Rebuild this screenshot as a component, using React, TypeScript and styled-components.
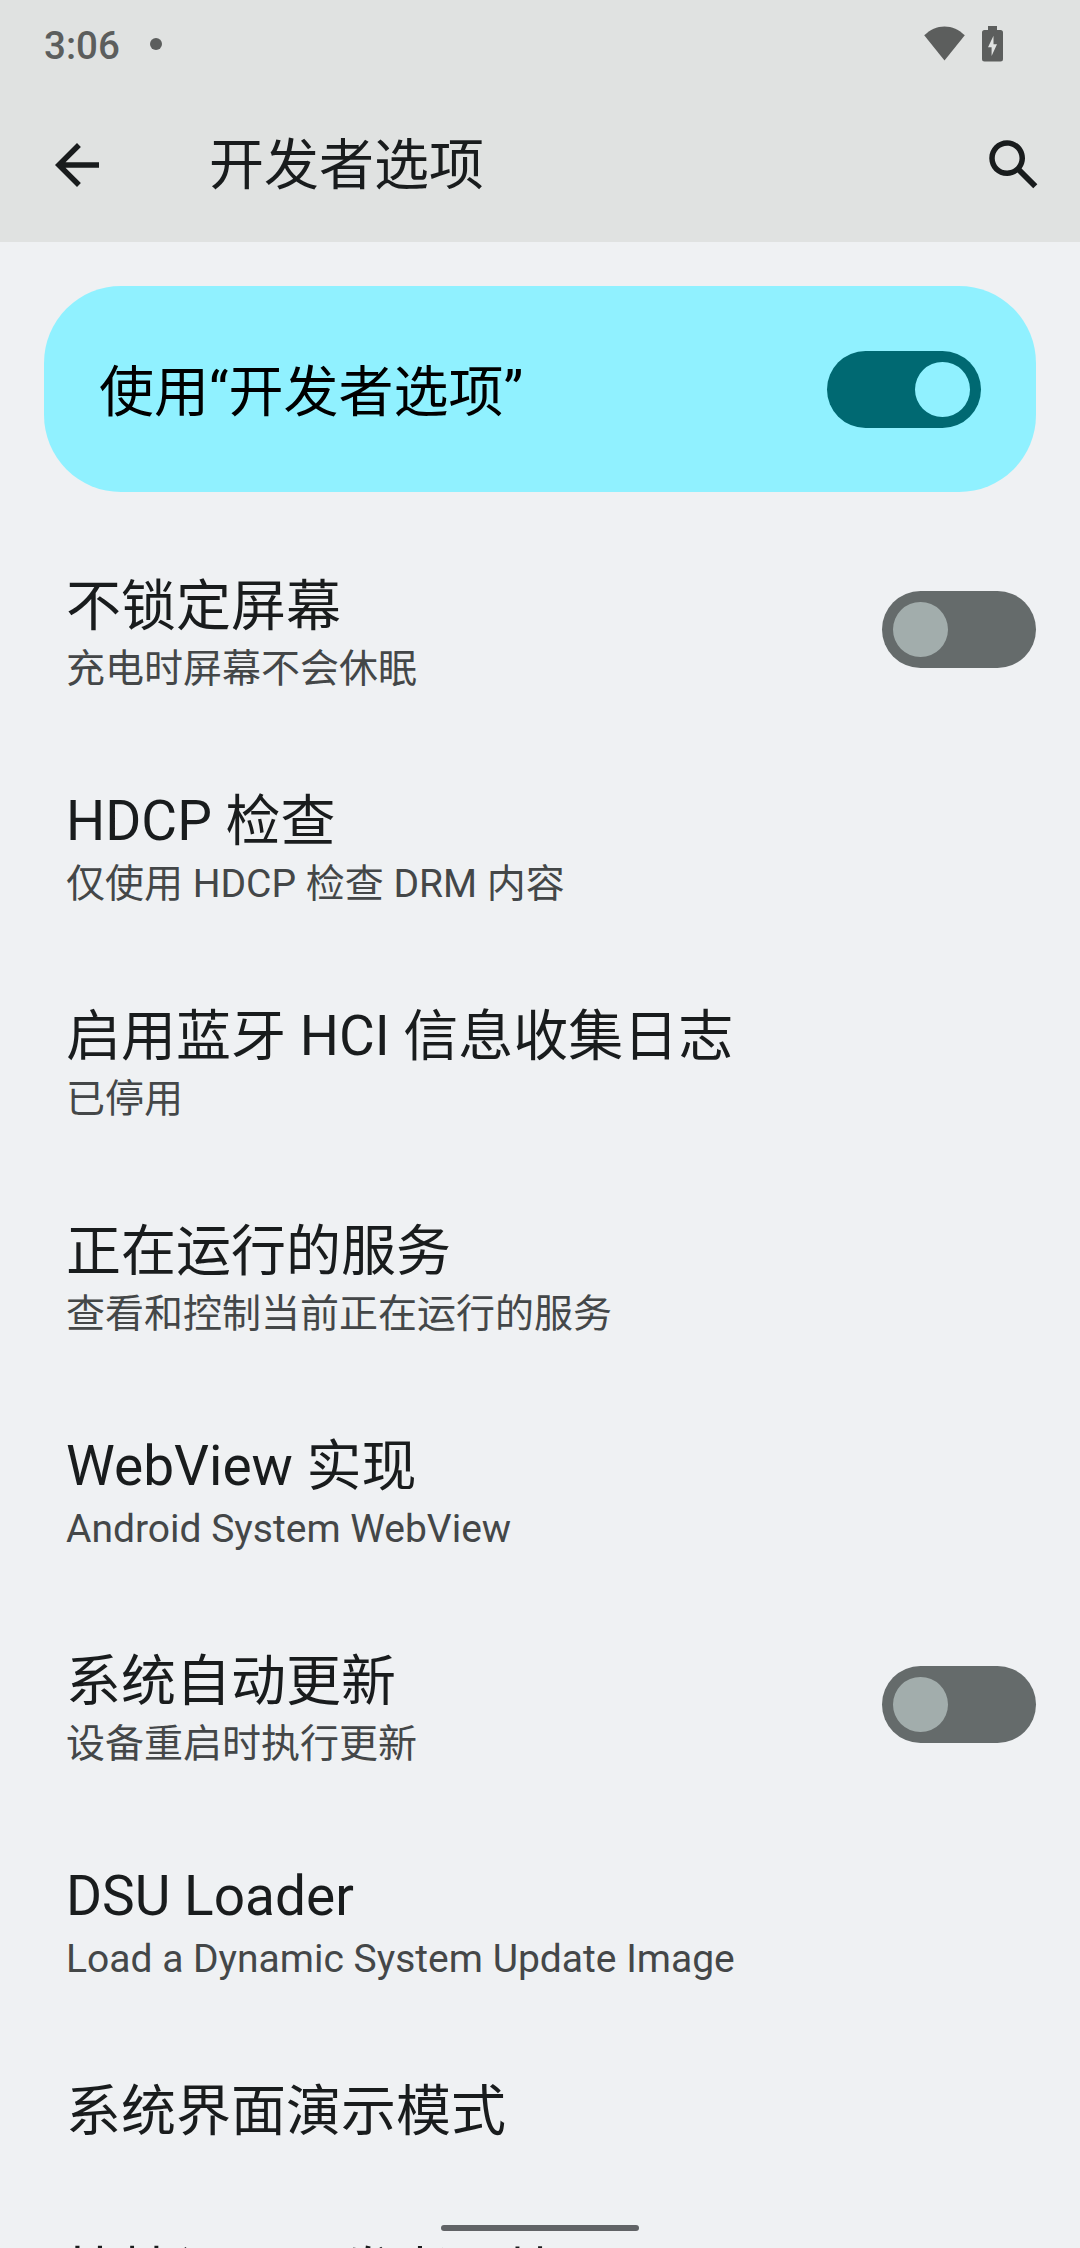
import React from 'react';
import styled, { createGlobalStyle } from 'styled-components';

const GlobalStyle = createGlobalStyle`
  * { box-sizing: border-box; }
  html, body { margin: 0; padding: 0; }
  body {
    background: #eff1f3;
    overflow: hidden;
    font-family: Roboto, 'Noto Sans CJK SC', sans-serif;
  }
`;

const Screen = styled.div`
  position: relative;
  display: flex;
  flex-direction: column;
  width: 1080px;
  height: 2248px;
  overflow: hidden;
  background: #eff1f3;
  color: #191c1d;
`;

const Header = styled.header`
  flex: none;
  height: 242px;
  background: #e0e2e1;
`;

const StatusBar = styled.div`
  display: flex;
  align-items: center;
  height: 88px;
  padding: 0 77px 0 44px;
  color: #5c5e5d;
`;

const Clock = styled.span`
  font-size: 38.5px;
  font-weight: 500;
  line-height: 46px;
  padding-top: 4px;
`;

const NotificationDot = styled.span`
  width: 12px;
  height: 12px;
  margin-left: 30px;
  border-radius: 50%;
  background: currentColor;
`;

const StatusIcons = styled.div`
  display: flex;
  align-items: flex-start;
  gap: 17px;
  height: 36px;
  margin-left: auto;
`;

const Toolbar = styled.div`
  display: flex;
  align-items: center;
  height: 154px;
  padding: 0 33px 0 44px;
`;

const IconButton = styled.button`
  display: flex;
  width: 66px;
  height: 66px;
  padding: 0;
  border: 0;
  background: none;
  color: #191c1d;
`;

const ToolbarTitle = styled.h1`
  flex: 1;
  margin: 0 0 0 99px;
  font-size: 55px;
  font-weight: 400;
  line-height: 65px;
`;

const MainSwitchCard = styled.section`
  flex: none;
  display: flex;
  align-items: center;
  justify-content: space-between;
  height: 206px;
  margin: 44px 44px 30px;
  padding: 0 55px;
  border-radius: 77px;
  background: #90f1ff;
  color: #000;
`;

const CardTitle = styled.span`
  font-size: 55px;
  line-height: 65px;
  padding-top: 6px;
`;

const Track = styled.span<{ $on: boolean }>`
  flex: none;
  display: flex;
  align-items: center;
  justify-content: ${({ $on }) => ($on ? 'flex-end' : 'flex-start')};
  width: 154px;
  height: 77px;
  padding: 0 11px;
  border-radius: 39px;
  background: ${({ $on }) => ($on ? '#006972' : '#656b6b')};
`;

const Thumb = styled.span<{ $on: boolean }>`
  width: 55px;
  height: 55px;
  border-radius: 50%;
  background: ${({ $on }) => ($on ? '#90f1ff' : '#a2adac')};
`;

const Row = styled.div<{ $single: boolean }>`
  flex: none;
  display: flex;
  align-items: center;
  justify-content: space-between;
  height: ${({ $single }) => ($single ? 162 : 215)}px;
  padding: 0 44px 0 66px;
`;

const RowText = styled.div`
  align-self: flex-start;
  padding-top: 52px;
`;

const RowTitle = styled.div`
  font-size: 55px;
  line-height: 65px;
  white-space: nowrap;
`;

const RowSummary = styled.div`
  font-size: 39px;
  line-height: 60px;
  color: #444748;
  white-space: nowrap;
`;

const GestureBar = styled.div`
  position: absolute;
  bottom: 17px;
  left: 441px;
  width: 198px;
  height: 6px;
  border-radius: 3px;
  background: #616366;
`;

const Switch = ({ on }: { on: boolean }) => (
  <Track $on={on} role="switch" aria-checked={on}>
    <Thumb $on={on} />
  </Track>
);

const WifiIcon = () => (
  <svg width="41" height="35" viewBox="0 0 41 35" fill="currentColor">
    <path d="M20.5 34.5 0.2 9.3C6 3.6 13 .4 20.5 .4S35 3.6 40.8 9.3Z" />
  </svg>
);

const BatteryIcon = () => (
  <svg width="21" height="36" viewBox="0 0 21 36" fill="currentColor">
    <path
      fillRule="evenodd"
      d="M6 0h9v4h3.500a2.500 2.500 0 0 1 2.500 2.500v26.500a2.500 2.500 0 0 1-2.500 2.500h-16a2.500 2.500 0 0 1-2.500-2.500V6.500A2.500 2.500 0 0 1 2.500 4H6ZM11.500 9.700 6 21.300h3.600V30L15 18.300h-3.500Z"
    />
  </svg>
);

const BackIcon = () => (
  <svg width="66" height="66" viewBox="0 0 24 24" fill="currentColor">
    <path d="M20 11H7.830l5.590-5.590L12 4l-8 8 8 8 1.410-1.410L7.830 13H20v-2z" />
  </svg>
);

const SearchIcon = () => (
  <svg width="66" height="66" viewBox="0 0 24 24" fill="currentColor">
    <path d="M20.490 19l-5.730-5.730C15.530 12.200 16 10.910 16 9.500 16 5.910 13.090 3 9.500 3S3 5.910 3 9.500C3 13.090 5.910 16 9.500 16c1.410 0 2.700-.470 3.770-1.240L19 20.490 20.490 19zM5 9.500C5 7.010 7.010 5 9.500 5S14 7.010 14 9.500 11.990 14 9.500 14 5 11.990 5 9.500z" />
  </svg>
);

type Item = { title: string; summary?: string; on?: boolean };

const items: Item[] = [
  { title: '不锁定屏幕', summary: '充电时屏幕不会休眠', on: false },
  { title: 'HDCP 检查', summary: '仅使用 HDCP 检查 DRM 内容' },
  { title: '启用蓝牙 HCI 信息收集日志', summary: '已停用' },
  { title: '正在运行的服务', summary: '查看和控制当前正在运行的服务' },
  { title: 'WebView 实现', summary: 'Android System WebView' },
  { title: '系统自动更新', summary: '设备重启时执行更新', on: false },
  { title: 'DSU Loader', summary: 'Load a Dynamic System Update Image' },
  { title: '系统界面演示模式' },
  { title: '快捷设置开发者图块' },
];

export default function App() {
  return (
    <>
      <GlobalStyle />
      <Screen lang="zh-CN">
        <Header>
          <StatusBar>
            <Clock>3:06</Clock>
            <NotificationDot />
            <StatusIcons>
              <WifiIcon />
              <BatteryIcon />
            </StatusIcons>
          </StatusBar>
          <Toolbar>
            <IconButton aria-label="返回">
              <BackIcon />
            </IconButton>
            <ToolbarTitle>开发者选项</ToolbarTitle>
            <IconButton aria-label="搜索">
              <SearchIcon />
            </IconButton>
          </Toolbar>
        </Header>
        <MainSwitchCard>
          <CardTitle>使用“开发者选项”</CardTitle>
          <Switch on />
        </MainSwitchCard>
        {items.map((item) => (
          <Row key={item.title} $single={!item.summary}>
            <RowText>
              <RowTitle>{item.title}</RowTitle>
              {item.summary && <RowSummary>{item.summary}</RowSummary>}
            </RowText>
            {item.on !== undefined && <Switch on={item.on} />}
          </Row>
        ))}
        <GestureBar />
      </Screen>
    </>
  );
}
